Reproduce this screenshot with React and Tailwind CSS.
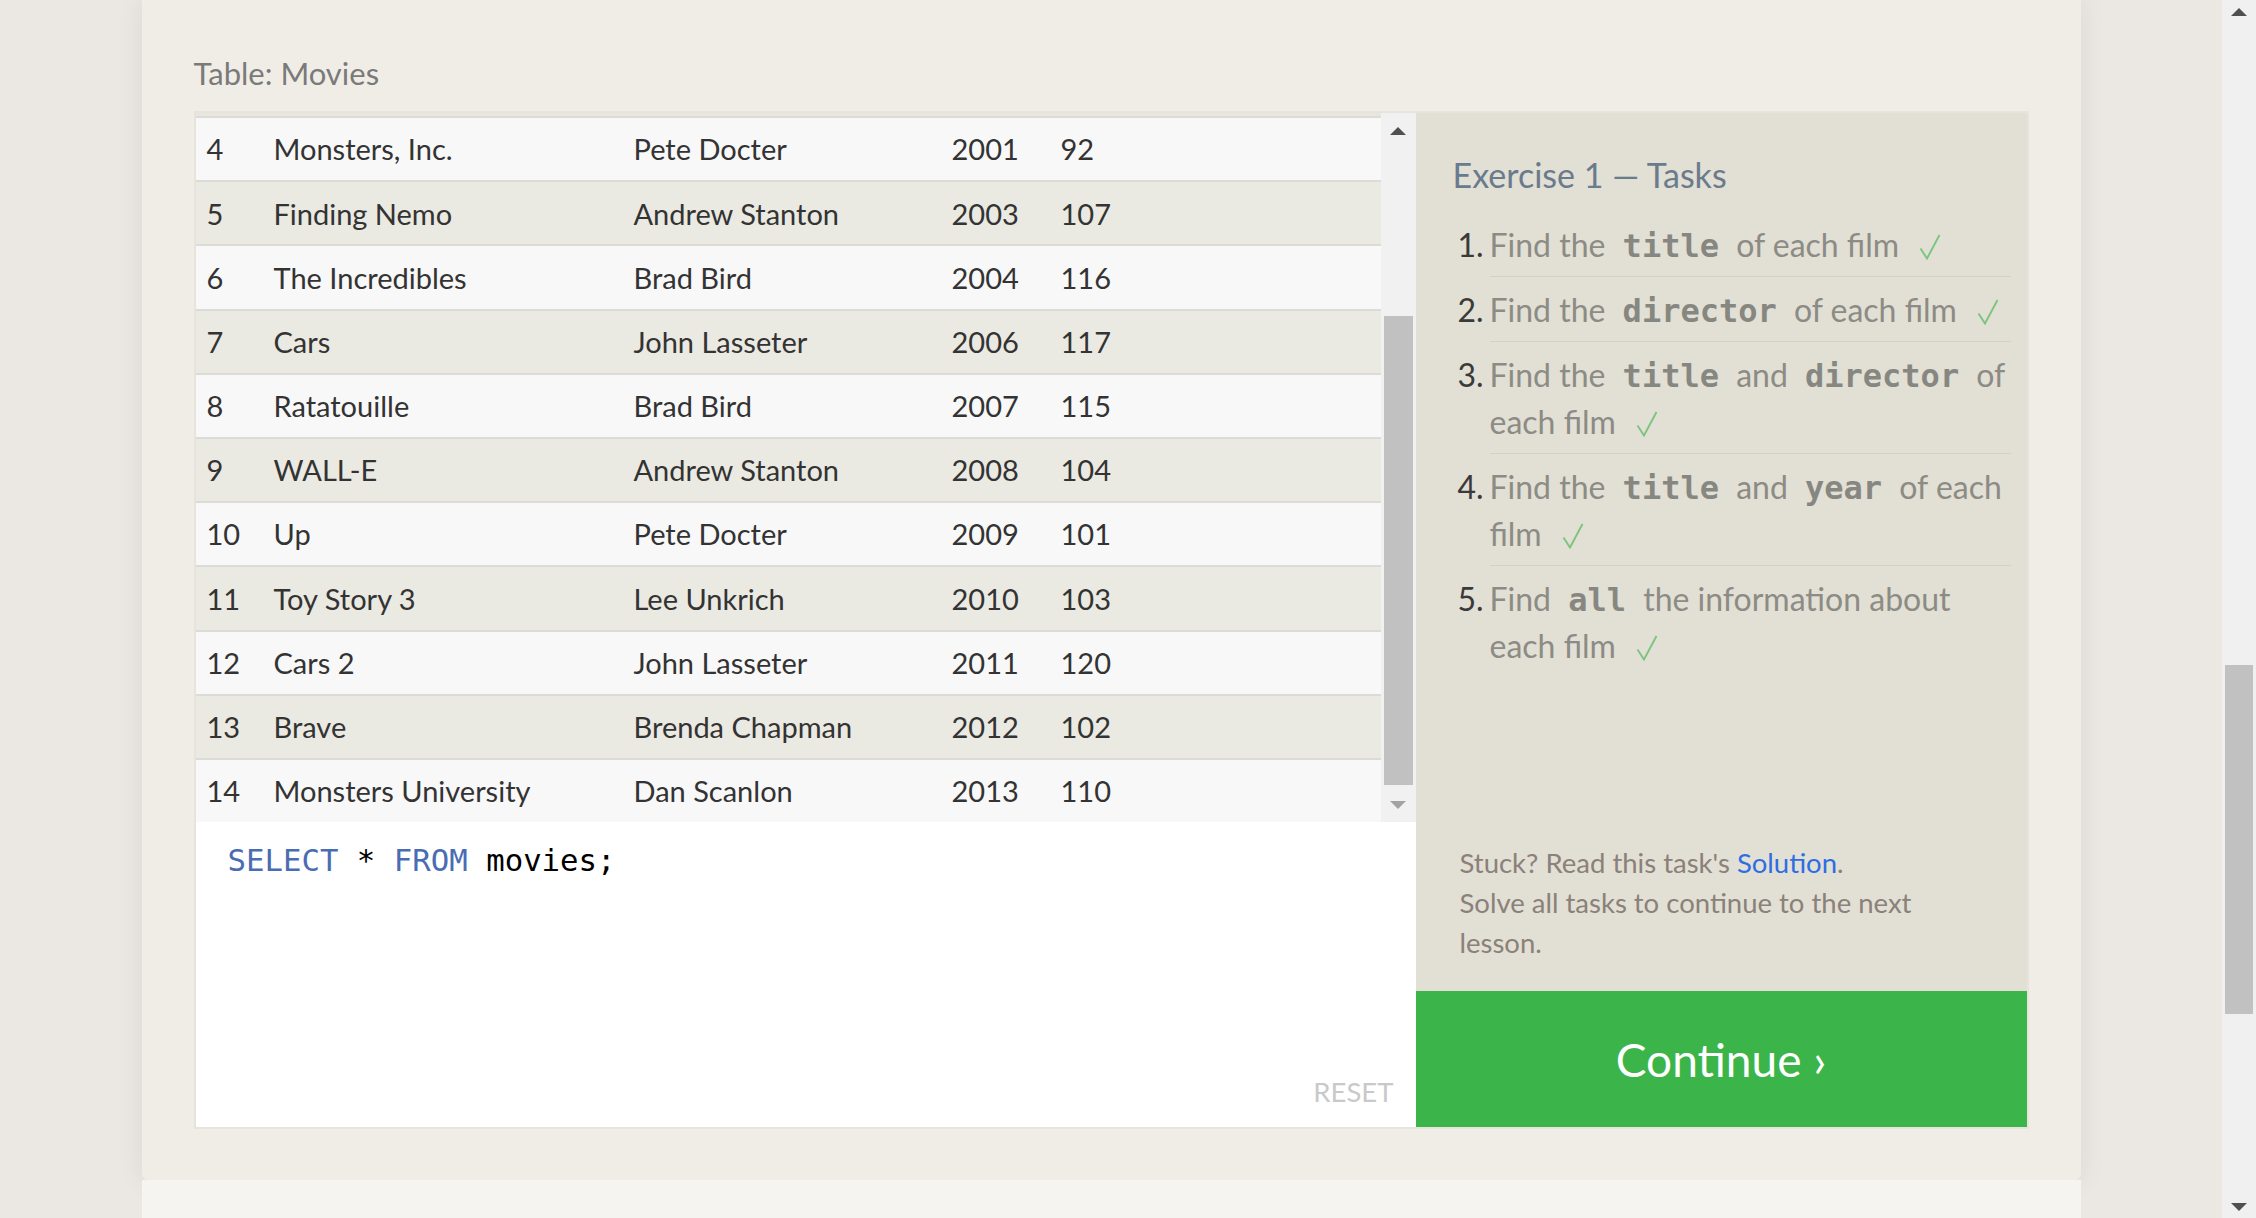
import React from "react";

const SANS = "font-['Lato','Open_Sans',sans-serif]";
const MONO = "font-['DejaVu_Sans_Mono','Liberation_Mono',monospace]";

const MOVIES = [
  [4, "Monsters, Inc.", "Pete Docter", 2001, 92],
  [5, "Finding Nemo", "Andrew Stanton", 2003, 107],
  [6, "The Incredibles", "Brad Bird", 2004, 116],
  [7, "Cars", "John Lasseter", 2006, 117],
  [8, "Ratatouille", "Brad Bird", 2007, 115],
  [9, "WALL-E", "Andrew Stanton", 2008, 104],
  [10, "Up", "Pete Docter", 2009, 101],
  [11, "Toy Story 3", "Lee Unkrich", 2010, 103],
  [12, "Cars 2", "John Lasseter", 2011, 120],
  [13, "Brave", "Brenda Chapman", 2012, 102],
  [14, "Monsters University", "Dan Scanlon", 2013, 110],
];

function Check() {
  return (
    <svg width="22" height="26" viewBox="0 0 22 26" className="inline-block ml-[20px] align-[-3px]">
      <path d="M1.5 14.5 L8 24.5 L20.5 1" fill="none" stroke="#7cc57e" strokeWidth="1.9" />
    </svg>
  );
}

function Code({ children }) {
  return <code className={`${MONO} font-bold text-[#878781] px-[9px] leading-none`}>{children}</code>;
}

function Task({ n, lines, last }) {
  return (
    <li className="flex">
      <span className="w-[32px] shrink-0 text-[#3a3a3a] pt-[9px]">{n}.</span>
      <div className={`flex-1 pt-[9px] pb-[8px] ${last ? "" : "border-b border-[#d3d1c6]"}`}>
        {lines.map((l, i) => (
          <div key={i} className="whitespace-nowrap h-[47px]">{l}</div>
        ))}
      </div>
    </li>
  );
}

function Arrow({ up, color }) {
  return (
    <svg width="16" height="9" viewBox="0 0 16 9">
      <path d={up ? "M0 9 L8 1 L16 9 Z" : "M0 0 L8 8 L16 0 Z"} fill={color} />
    </svg>
  );
}

export default function App() {
  return (
    <div className={`flex w-[2256px] h-[1218px] overflow-hidden bg-[#ebe7e3] ${SANS}`}>
      <div className="flex-1 flex justify-center">
        <div className="w-[1939px] flex flex-col">
          <section className="h-[1180px] bg-[#f0ede6] rounded-b-[6px] px-[52px] flex flex-col shadow-[0_0_24px_rgba(120,110,100,0.12)]">
            <h2 className="pt-[55px] text-[31px] leading-[36px] text-[#7a7a7a]">Table: Movies</h2>

            {/* table + tasks panel */}
            <div className="mt-[20px] border-2 border-[#e6e4dc] flex h-[1018px]">
              {/* left: result table and editor */}
              <div className="w-[1220px] flex flex-col">
                <div className="h-[709px] flex">
                  <div className="flex-1 bg-[#e8e6df] pt-[3px] overflow-hidden text-[29px] text-[#333]">
                    {MOVIES.map((m, i) => (
                      <div
                        key={m[0]}
                        className={`h-[64.2px] border-t-2 border-[#dcdbd8] flex items-center ${i % 2 === 0 ? "bg-[#f8f8f8]" : "bg-[#eae9e2]"}`}
                      >
                        <span className="w-[78px] pl-[11px]">{m[0]}</span>
                        <span className="w-[360px]">{m[1]}</span>
                        <span className="w-[318px]">{m[2]}</span>
                        <span className="w-[109px]">{m[3]}</span>
                        <span>{m[4]}</span>
                      </div>
                    ))}
                  </div>
                  <div className="w-[35px] bg-[#f1f1f1] flex flex-col items-center">
                    <div className="h-[34px] flex items-center justify-center"><Arrow up color="#505050" /></div>
                    <div className="flex-1 w-full px-[3px] pt-[169px] pb-[2px]">
                      <div className="h-[469px] bg-[#c1c1c1]" />
                    </div>
                    <div className="h-[34px] flex items-center justify-center"><Arrow color="#a3a3a3" /></div>
                  </div>
                </div>
                <div className="flex-1 bg-white flex flex-col pl-[32px] pr-[22px] pt-[19px] pb-[15px]">
                  <div className={`${MONO} text-[30.7px] leading-[40px] text-black`}>
                    <span className="text-[#4a6cb3]">SELECT</span> * <span className="text-[#4a6cb3]">FROM</span> movies;
                  </div>
                  <div className="mt-auto self-end text-[27.5px] text-[#c9c9c9]">RESET</div>
                </div>
              </div>

              {/* right: tasks */}
              <div className="flex-1 flex flex-col">
                <div className="flex-1 bg-[#e2dfd4] pl-[37px] pr-[16px] pt-[40px] pb-[28px] flex flex-col">
                  <h3 className="text-[34px] leading-[44px] text-[#6a7b8d]">Exercise 1 — Tasks</h3>
                  <ol className="mt-[15px] pl-[5px] text-[32px] leading-[47px] text-[#8c8b85]">
                    <Task n={1} lines={[<>Find the <Code>title</Code> of each film<Check /></>]} />
                    <Task n={2} lines={[<>Find the <Code>director</Code> of each film<Check /></>]} />
                    <Task n={3} lines={[<>Find the <Code>title</Code> and <Code>director</Code> of</>, <>each film<Check /></>]} />
                    <Task n={4} lines={[<>Find the <Code>title</Code> and <Code>year</Code> of each</>, <>film<Check /></>]} />
                    <Task n={5} last lines={[<>Find <Code>all</Code> the information about</>, <>each film<Check /></>]} />
                  </ol>
                  <div className="mt-auto pl-[7px] text-[27.5px] leading-[40px] text-[#8a817a]">
                    <p>Stuck? Read this task's <span className="text-[#2d6ee4]">Solution</span>.</p>
                    <p>Solve all tasks to continue to the next<br />lesson.</p>
                  </div>
                </div>
                <div className="h-[136px] bg-[#3bb54a] flex items-center justify-center text-white text-[46px]">
                  Continue ›
                </div>
              </div>
            </div>
          </section>
          <div className="flex-1 bg-[#f5f4f0]" />
        </div>
      </div>

      {/* browser scrollbar */}
      <div className="w-[34px] bg-[#f0f0f0] flex flex-col items-center">
        <div className="h-[22px] flex items-center"><Arrow up color="#505050" /></div>
        <div className="flex-1 w-full px-[3px] pt-[643px]">
          <div className="h-[349px] bg-[#c1c1c1]" />
        </div>
        <div className="h-[22px] flex items-center"><Arrow color="#505050" /></div>
      </div>
    </div>
  );
}
